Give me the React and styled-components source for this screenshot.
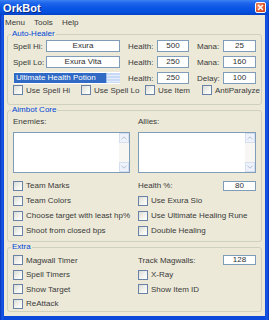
import React from "react";
import styled, { createGlobalStyle } from "styled-components";

const GlobalStyle = createGlobalStyle`
  html, body {
    margin: 0;
    padding: 0;
    background: #ffffff;
  }
  * {
    box-sizing: border-box;
  }
`;

const Window = styled.div`
  width: 269px;
  height: 320px;
  display: flex;
  flex-direction: column;
  background: linear-gradient(90deg, #0831b8 0px, #1658e6 2px, #0a48dc 4px, #0a48dc calc(100% - 4px), #1658e6 calc(100% - 2px), #0831b8 100%);
  font-family: "Liberation Sans", Arial, sans-serif;
  font-size: 8px;
  color: #3a3a3a;
  overflow: hidden;
`;

const TitleBar = styled.div`
  height: 15px;
  flex: none;
  display: flex;
  align-items: center;
  justify-content: space-between;
  padding: 0 3px 0 3px;
  background: linear-gradient(#3d82f4 0px, #1e66ec 3px, #0a55e4 8px, #0650de 12px, #0442c8 15px);
`;

const Title = styled.span`
  color: #ffffff;
  font-size: 11px;
  font-weight: bold;
  letter-spacing: 0.1px;
  text-shadow: 1px 1px 0 #0a2a80;
`;

const CloseButton = styled.div`
  width: 11px;
  height: 11px;
  border: 1px solid #ffffff;
  border-radius: 2px;
  background: radial-gradient(circle at 35% 35%, #f29a78 0%, #e1582d 55%, #c23a12 100%);
  display: flex;
  align-items: center;
  justify-content: center;
`;

const Client = styled.div`
  flex: 1;
  margin: 0 4px 4px;
  background: #ece9d8;
  display: flex;
  flex-direction: column;
  padding: 0 3px 4px;
`;

const MenuBar = styled.div`
  height: 14px;
  display: flex;
  align-items: center;
  margin: 0 -3px;
  padding-left: 1px;
`;

const MenuItem = styled.span`
  width: ${(p) => p.w}px;
`;

const Group = styled.fieldset`
  margin: 0;
  padding: 1px 5px ${(p) => p.pb || 0}px;
  border: 1px solid #d0d0bf;
  border-radius: 3px;
  min-width: 0;
  flex: ${(p) => (p.grow ? 1 : "none")};
`;

const Legend = styled.legend`
  color: #0046d5;
  padding: 0 1px;
  margin-left: -2px;
  line-height: 10px;
  font-size: 8px;
`;

const FieldGrid = styled.div`
  display: grid;
  grid-template-columns: 33px 74px 37px 32px 34px 33px;
  grid-auto-rows: 12px;
  row-gap: 4px;
  align-items: center;
`;

const Label = styled.span`
  padding-left: ${(p) => p.indent || 0}px;
  white-space: nowrap;
`;

const TextBox = styled.div`
  height: 12px;
  border: 1px solid #7f9db9;
  background: #ffffff;
  display: flex;
  align-items: center;
  justify-content: center;
  line-height: 10px;
  color: #2e2e2e;
`;

const Combo = styled.div`
  grid-column: span 2;
  margin-left: 1px;
  width: 106px;
  height: 12px;
  display: flex;
  padding: 1px 0;
  background: #ffffff;
`;

const ComboText = styled.div`
  flex: 1;
  background: #316ac5;
  color: #ffffff;
  line-height: 10px;
  padding-left: 2px;
  white-space: nowrap;
`;

const ComboButton = styled.div`
  width: 14px;
  background: repeating-linear-gradient(#c8d9f6 0px, #c8d9f6 2px, #e4edfc 2px, #e4edfc 3px);
  border-left: 1px solid #9fbbe8;
`;

const CheckRow = styled.div`
  display: grid;
  grid-template-columns: ${(p) => p.cols};
  height: 10px;
  align-items: center;
  margin-top: ${(p) => p.mt || 0}px;
`;

const CheckWrap = styled.label`
  display: flex;
  align-items: center;
  gap: 3px;
  white-space: nowrap;
`;

const Box = styled.span`
  width: 10px;
  height: 10px;
  flex: none;
  border: 1px solid #6a82a6;
  background: linear-gradient(135deg, #dcdcd7 0%, #f4f4f0 60%, #ffffff 100%);
`;

const Check = ({ children }) => (
  <CheckWrap>
    <Box />
    <span>{children}</span>
  </CheckWrap>
);

const ListHeads = styled.div`
  display: grid;
  grid-template-columns: 125px 1fr;
  height: 10px;
  line-height: 10px;
  margin-top: 1px;
`;

const Lists = styled.div`
  display: grid;
  grid-template-columns: 117px 118px;
  column-gap: 8px;
  margin-top: 5px;
`;

const ListBox = styled.div`
  height: 41px;
  border: 1px solid #7f9db9;
  background: #ffffff;
  display: flex;
  justify-content: flex-end;
`;

const ScrollBar = styled.div`
  width: 10px;
  display: flex;
  flex-direction: column;
  justify-content: space-between;
  background: #f7f6f2;
`;

const ScrollArrow = styled.div`
  height: 10px;
  background: #eef2fb;
  border: 1px solid #d6dfef;
  display: flex;
  align-items: center;
  justify-content: center;
`;

const Chevron = ({ down }) => (
  <svg width="6" height="4" viewBox="0 0 6 4">
    <path
      d={down ? "M0.5 0.8 L3 3.2 L5.5 0.8" : "M0.5 3.2 L3 0.8 L5.5 3.2"}
      fill="none"
      stroke="#b6bfd3"
      strokeWidth="1"
    />
  </svg>
);

const List = () => (
  <ListBox>
    <ScrollBar>
      <ScrollArrow>
        <Chevron />
      </ScrollArrow>
      <ScrollArrow>
        <Chevron down />
      </ScrollArrow>
    </ScrollBar>
  </ListBox>
);

const OptionGrid = styled.div`
  display: grid;
  grid-template-columns: 125px 1fr;
  grid-auto-rows: ${(p) => p.rh}px;
  align-items: center;
  margin-top: ${(p) => p.mt || 0}px;
`;

const ValueRow = styled.div`
  display: flex;
  align-items: center;
  justify-content: space-between;
`;

const SmallBox = styled(TextBox)`
  width: 33px;
  height: 10px;
`;

const App = () => (
  <>
    <GlobalStyle />
    <Window>
      <TitleBar>
        <Title>OrkBot</Title>
        <CloseButton>
          <svg width="7" height="7" viewBox="0 0 7 7">
            <path d="M1 1 L6 6 M6 1 L1 6" stroke="#ffffff" strokeWidth="1.4" />
          </svg>
        </CloseButton>
      </TitleBar>
      <Client>
        <MenuBar>
          <MenuItem w={29}>Menu</MenuItem>
          <MenuItem w={28}>Tools</MenuItem>
          <MenuItem w={30}>Help</MenuItem>
        </MenuBar>

        <Group pb={9}>
          <Legend>Auto-Healer</Legend>
          <FieldGrid>
            <Label>Spell Hi:</Label>
            <TextBox>Exura</TextBox>
            <Label indent={8}>Health:</Label>
            <TextBox>500</TextBox>
            <Label indent={8}>Mana:</Label>
            <TextBox>25</TextBox>

            <Label>Spell Lo:</Label>
            <TextBox>Exura Vita</TextBox>
            <Label indent={8}>Health:</Label>
            <TextBox>250</TextBox>
            <Label indent={8}>Mana:</Label>
            <TextBox>160</TextBox>

            <Combo>
              <ComboText>Ultimate Health Potion</ComboText>
              <ComboButton />
            </Combo>
            <Label indent={8}>Health:</Label>
            <TextBox>250</TextBox>
            <Label indent={8}>Delay:</Label>
            <TextBox>100</TextBox>
          </FieldGrid>
          <CheckRow cols="68px 64px 57px 1fr" mt={1}>
            <Check>Use Spell Hi</Check>
            <Check>Use Spell Lo</Check>
            <Check>Use Item</Check>
            <Check>AntiParalyze</Check>
          </CheckRow>
        </Group>

        <Group pb={3}>
          <Legend>Aimbot Core</Legend>
          <ListHeads>
            <span>Enemies:</span>
            <span>Allies:</span>
          </ListHeads>
          <Lists>
            <List />
            <List />
          </Lists>
          <OptionGrid rh={15} mt={5}>
            <Check>Team Marks</Check>
            <ValueRow>
              <span>Health %:</span>
              <SmallBox>80</SmallBox>
            </ValueRow>
            <Check>Team Colors</Check>
            <Check>Use Exura Sio</Check>
            <Check>Choose target with least hp%</Check>
            <Check>Use Ultimate Healing Rune</Check>
            <Check>Shoot from closed bps</Check>
            <Check>Double Healing</Check>
          </OptionGrid>
        </Group>

        <Group grow>
          <Legend>Extra</Legend>
          <OptionGrid rh={14.5} mt={0}>
            <Check>Magwall Timer</Check>
            <ValueRow>
              <span>Track Magwalls:</span>
              <SmallBox>128</SmallBox>
            </ValueRow>
            <Check>Spell Timers</Check>
            <Check>X-Ray</Check>
            <Check>Show Target</Check>
            <Check>Show Item ID</Check>
            <Check>ReAttack</Check>
            <span />
          </OptionGrid>
        </Group>
      </Client>
    </Window>
  </>
);

export default App;
